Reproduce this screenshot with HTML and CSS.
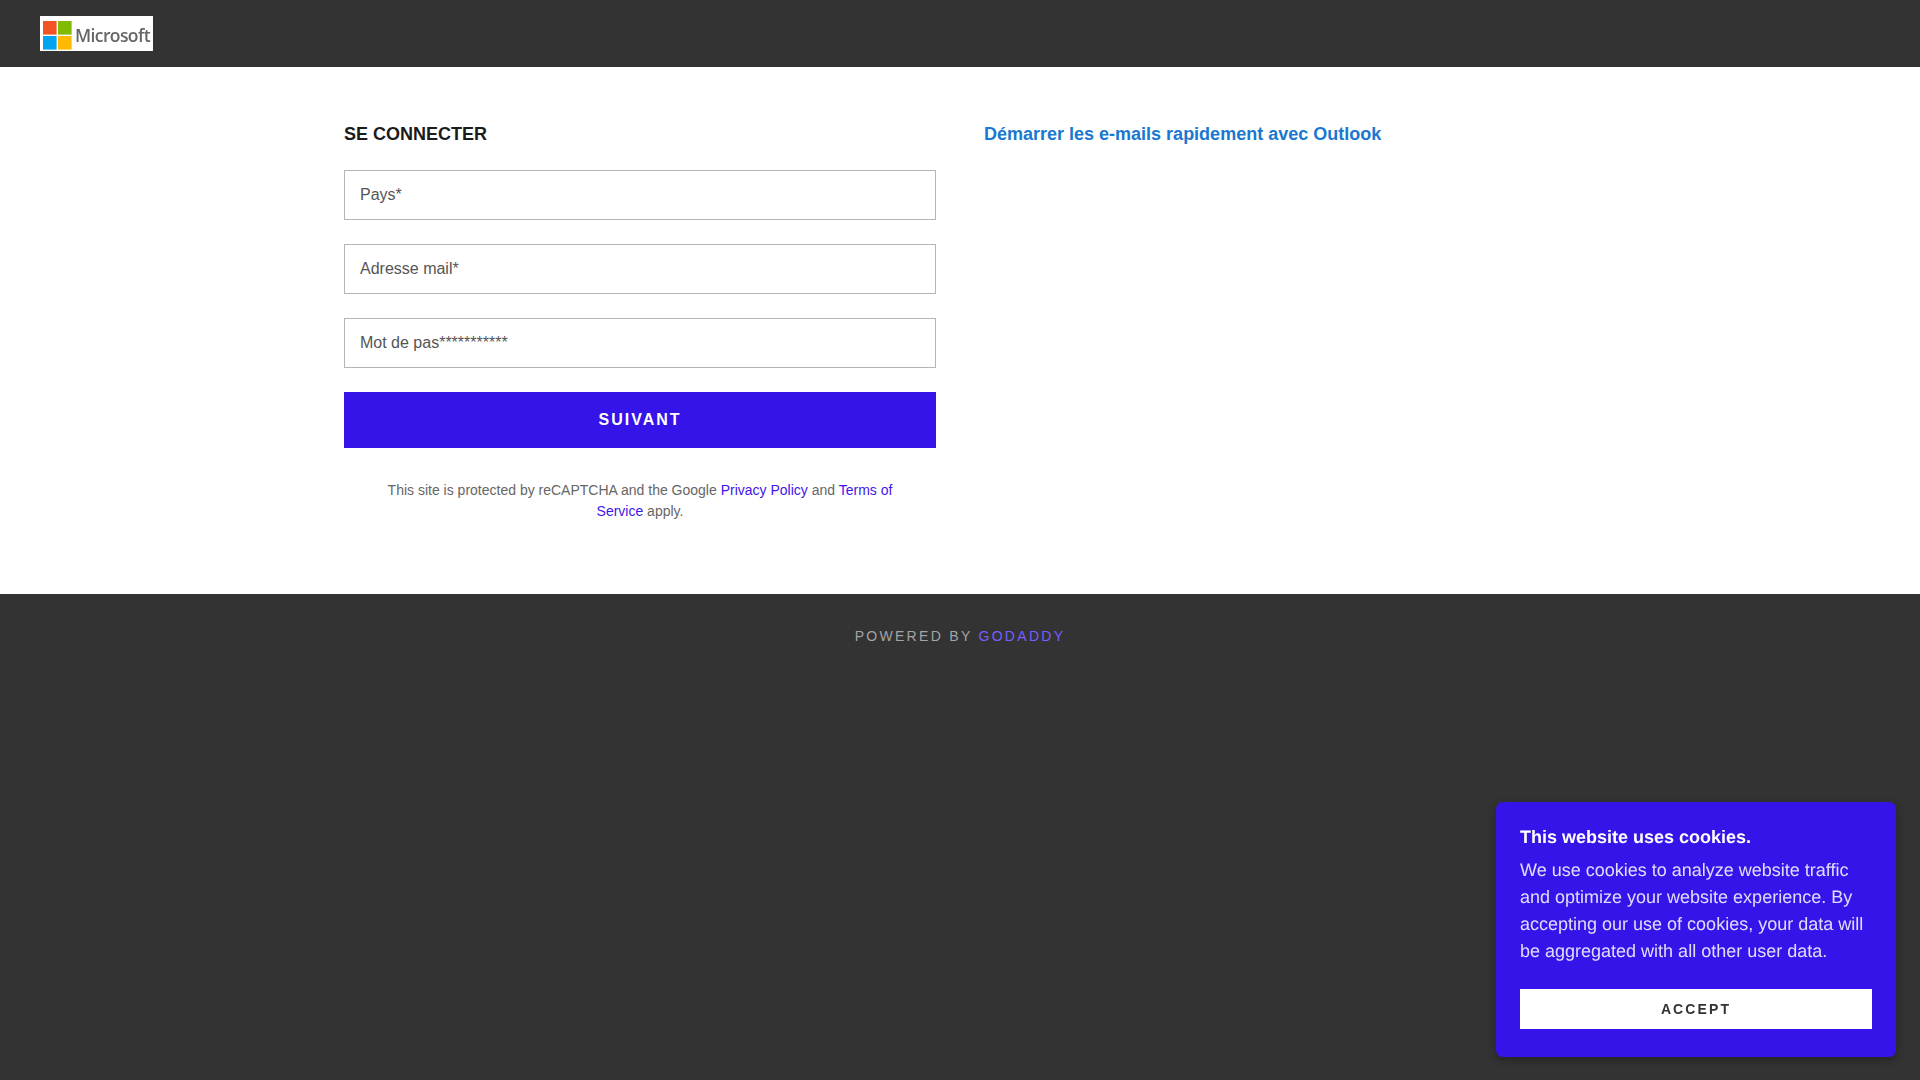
FILE: index.html
```html
<!DOCTYPE html>
<html lang="fr">
<head>
<meta charset="utf-8">
<title>Se connecter</title>
<link rel="stylesheet" href="styles.css">
</head>
<body>
<header class="topbar">
  <div class="logo">
    <svg class="logo-mark" width="29" height="29" viewBox="0 0 29 29" aria-hidden="true">
      <rect x="0" y="0" width="13.6" height="13.6" fill="#f25325"/>
      <rect x="15" y="0" width="13.6" height="13.6" fill="#80ba01"/>
      <rect x="0" y="15" width="13.6" height="13.6" fill="#02a4ef"/>
      <rect x="15" y="15" width="13.6" height="13.6" fill="#ffb902"/>
    </svg>
    <span class="logo-text">Microsoft</span>
  </div>
</header>
<main class="content">
  <section class="form-col">
    <h2 class="title">SE CONNECTER</h2>
    <form class="form">
      <input class="field" type="text" placeholder="Pays*">
      <input class="field" type="text" placeholder="Adresse mail*">
      <input class="field" type="text" placeholder="Mot de pas***********">
      <button class="submit" type="button">SUIVANT</button>
    </form>
    <p class="legal">This site is protected by reCAPTCHA and the Google <a href="#">Privacy Policy</a> and <a href="#">Terms of Service</a> apply.</p>
  </section>
  <section class="info-col">
    <h2 class="title title-link">Démarrer les e-mails rapidement avec Outlook</h2>
  </section>
</main>
<footer class="footer">
  <p class="powered">POWERED BY <a href="#">GODADDY</a></p>
</footer>
<aside class="cookie">
  <h4 class="cookie-title">This website uses cookies.</h4>
  <p class="cookie-text">We use cookies to analyze website traffic and optimize your website experience. By accepting our use of cookies, your data will be aggregated with all other user data.</p>
  <button class="accept" type="button">ACCEPT</button>
</aside>
</body>
</html>
```
FILE: styles.css
```css
* { box-sizing: border-box; }
html, body { margin: 0; height: 100%; }
body {
  display: flex;
  flex-direction: column;
  height: 1080px;
  overflow: hidden;
  background: #333333;
  font-family: "Liberation Sans", Arial, sans-serif;
}
.topbar {
  height: 67px;
  flex: none;
  background: #333333;
  padding: 16px 0 0 40px;
}
.logo {
  width: 113px;
  height: 35px;
  background: #ffffff;
  display: flex;
  align-items: center;
  gap: 3px;
  padding: 4px 0 0 3px;
  filter: blur(0.5px);
}
.logo-mark { flex: none; }
.logo-text {
  font-family: "Open Sans", "Liberation Sans", sans-serif;
  font-size: 17.5px;
  font-weight: 600;
  letter-spacing: -0.6px;
  line-height: 1;
  color: #666666;
}
.content {
  height: 527px;
  flex: none;
  background: #ffffff;
  padding: 56px 0 0 344px;
  display: grid;
  grid-template-columns: 592px 592px;
  column-gap: 48px;
  align-content: start;
}
.title {
  margin: 0 0 25px;
  font-size: 18px;
  line-height: 22px;
  font-weight: 700;
  color: #1b1b1b;
}
.title-link { color: #1a78d0; }
.form { display: flex; flex-direction: column; gap: 24px; }
.field {
  display: block;
  width: 100%;
  height: 50px;
  border: 1px solid #b5b5b5;
  border-radius: 0;
  background: #ffffff;
  padding: 0 15px;
  font-family: inherit;
  font-size: 16px;
  color: #555555;
  outline: none;
}
.field::placeholder { color: #555555; opacity: 1; }
.submit {
  height: 56px;
  border: 0;
  background: #3414e8;
  color: #ffffff;
  font-family: inherit;
  font-size: 16px;
  font-weight: 700;
  letter-spacing: 2px;
  padding: 0;
}
.legal {
  margin: 32px 0 0;
  padding: 0 32px;
  text-align: center;
  font-size: 14px;
  line-height: 21px;
  color: #666666;
}
.legal a { color: #3f16e9; text-decoration: none; }
.footer {
  flex: 1;
  background: #333333;
  padding-top: 32px;
}
.powered {
  margin: 0;
  text-align: center;
  font-size: 14px;
  line-height: 21px;
  letter-spacing: 2.3px;
  color: #a4a4a4;
}
.powered a { color: #7a5cff; text-decoration: none; }
.cookie {
  position: fixed;
  right: 24px;
  bottom: 23px;
  width: 400px;
  height: 255px;
  padding: 24px;
  background: #3414e8;
  border-radius: 7px;
  box-shadow: 0 3px 8px rgba(0, 0, 0, 0.3);
  text-rendering: geometricPrecision;
  will-change: transform;
}
.cookie-title {
  margin: 0 0 10px;
  padding-top: 1px;
  font-size: 18px;
  line-height: 20px;
  font-weight: 700;
  color: #ffffff;
}
.cookie-text {
  margin: 0 0 24px;
  font-size: 18px;
  line-height: 27px;
  color: #e0dcfb;
}
.accept {
  display: block;
  width: 100%;
  height: 40px;
  border: 0;
  padding: 0;
  background: #ffffff;
  color: #333333;
  font-family: inherit;
  font-size: 14px;
  font-weight: 700;
  letter-spacing: 2.1px;
}
```
